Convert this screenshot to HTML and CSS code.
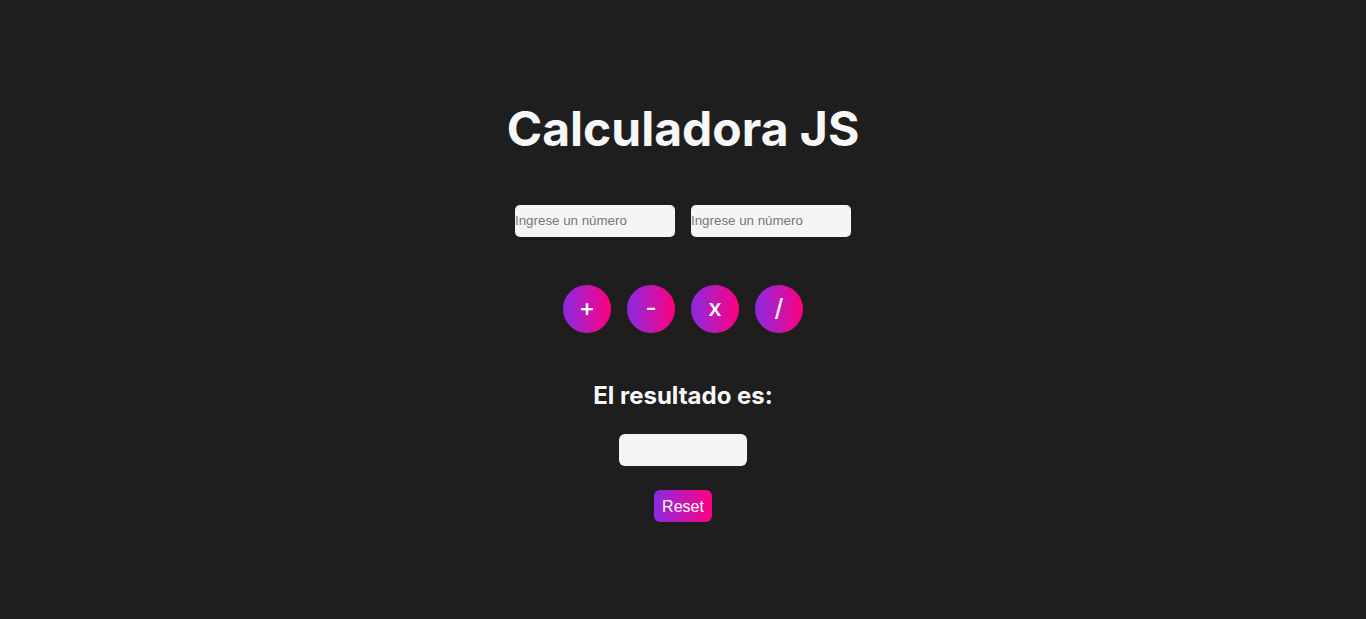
FILE: index.html
```html
<!DOCTYPE html>
<html lang="es">
<head>
<meta charset="utf-8">
<title>Calculadora JS</title>
<link rel="stylesheet" href="styles.css">
</head>
<body>
<main class="calc">
  <h1 class="title">Calculadora JS</h1>
  <div class="inputs">
    <input class="num" type="text" placeholder="Ingrese un número">
    <input class="num" type="text" placeholder="Ingrese un número">
  </div>
  <div class="ops">
    <button class="op">+</button>
    <button class="op">-</button>
    <button class="op">x</button>
    <button class="op">/</button>
  </div>
  <h2 class="result-label">El resultado es:</h2>
  <div class="result"></div>
  <button class="reset">Reset</button>
</main>
</body>
</html>
```
FILE: styles.css
```css
html, body {
  margin: 0;
  padding: 0;
  background: #1e1e1e;
  height: 100%;
}
body {
  font-family: Inter, "Liberation Sans", sans-serif;
  color: #f7f7f7;
}
.calc {
  display: flex;
  flex-direction: column;
  align-items: center;
  padding-top: 100px;
}
.title {
  margin: 0;
  font-size: 48px;
  line-height: 58px;
  font-weight: 700;
  color: #f7f7f7;
}
.inputs {
  display: flex;
  gap: 16px;
  margin-top: 47px;
}
.num {
  box-sizing: border-box;
  width: 160px;
  height: 32px;
  border: none;
  border-radius: 5px;
  background: #f5f5f5;
  padding: 0 0 2px;
  font-family: "Liberation Sans", Arial, sans-serif;
  font-size: 13.333px;
  outline: none;
}
.num::placeholder {
  color: #757575;
}
.ops {
  display: flex;
  gap: 16px;
  margin-top: 48px;
}
.op {
  width: 48px;
  height: 48px;
  border: none;
  border-radius: 50%;
  background: linear-gradient(90deg, #8a2be2, #ff0080);
  color: #fff;
  font-family: Inter, "Liberation Sans", sans-serif;
  font-size: 24px;
  font-weight: 500;
  line-height: 1;
  padding: 0 0 3px;
  cursor: pointer;
}
.result-label {
  margin: 48px 0 0;
  font-size: 24px;
  line-height: 29px;
  font-weight: 700;
  color: #f7f7f7;
}
.result {
  margin-top: 24px;
  width: 128px;
  height: 32px;
  border-radius: 6px;
  background: #f5f5f5;
}
.reset {
  margin-top: 24px;
  height: 32px;
  width: 58px;
  border: none;
  border-radius: 6px;
  background: linear-gradient(90deg, #8a2be2, #ff0080);
  color: #fff;
  font-family: "Liberation Sans", Arial, sans-serif;
  font-size: 16px;
  padding: 1px 0 0;
  cursor: pointer;
}
```
